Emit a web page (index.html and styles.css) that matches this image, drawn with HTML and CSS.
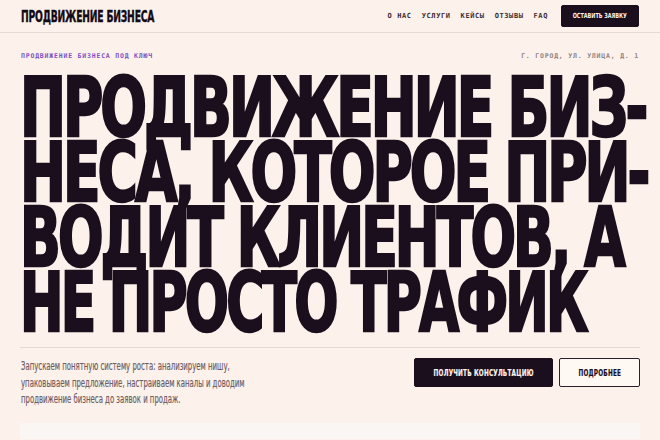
FILE: index.html
```html
<!DOCTYPE html>
<html lang="ru">
<head>
<meta charset="utf-8">
<title>Продвижение бизнеса</title>
<link rel="stylesheet" href="styles.css">
</head>
<body>
<header class="top">
  <a class="logo" href="#"><span class="logo-text">ПРОДВИЖЕНИЕ БИЗНЕСА</span></a>
  <nav class="nav">
    <a href="#">О НАС</a>
    <a href="#">УСЛУГИ</a>
    <a href="#">КЕЙСЫ</a>
    <a href="#">ОТЗЫВЫ</a>
    <a href="#">FAQ</a>
    <a class="btn btn-dark btn-small" href="#"><span class="btn-label">ОСТАВИТЬ ЗАЯВКУ</span></a>
  </nav>
</header>
<main class="hero">
  <div class="meta">
    <span class="eyebrow">ПРОДВИЖЕНИЕ БИЗНЕСА ПОД КЛЮЧ</span>
    <span class="address">Г. ГОРОД, УЛ. УЛИЦА, Д. 1</span>
  </div>
  <h1 class="title">
    <span class="line">ПРОДВИЖЕНИЕ БИЗ-</span>
    <span class="line">НЕСА, КОТОРОЕ ПРИ-</span>
    <span class="line line-tight">ВОДИТ КЛИЕНТОВ, А</span>
    <span class="line line-tighter">НЕ ПРОСТО ТРАФИК</span>
  </h1>
  <div class="lead-row">
    <p class="lead"><span class="lead-text">Запускаем понятную систему роста: анализируем нишу,<br>упаковываем предложение, настраиваем каналы и доводим<br>продвижение бизнеса до заявок и продаж.</span></p>
    <div class="actions">
      <a class="btn btn-dark btn-big btn-wide" href="#"><span class="btn-label">ПОЛУЧИТЬ КОНСУЛЬТАЦИЮ</span></a>
      <a class="btn btn-outline btn-big btn-narrow" href="#"><span class="btn-label">ПОДРОБНЕЕ</span></a>
    </div>
  </div>
  <div class="panel"></div>
</main>
</body>
</html>
```
FILE: styles.css
```css
* { box-sizing: border-box; }
html, body { margin: 0; padding: 0; }
body {
  background: #fdf2eb;
  color: #1b0f1e;
  font-family: "DejaVu Sans Condensed", "DejaVu Sans", sans-serif;
  font-stretch: condensed;
  width: 660px;
  height: 440px;
  overflow: hidden;
}
a { color: inherit; text-decoration: none; }

.top {
  height: 33px;
  border-bottom: 1px solid #e6d9d1;
  display: flex;
  align-items: center;
  justify-content: space-between;
  padding: 0 21px 0 21px;
}
.logo { width: 140px; }
.logo-text {
  display: inline-block;
  white-space: nowrap;
  font-size: 16px;
  font-weight: 700;
  line-height: 16px;
  letter-spacing: -0.3px;
  -webkit-text-stroke: 0.4px #140a16;
  transform: scaleX(0.64);
  transform-origin: left center;
  color: #140a16;
}
.nav {
  display: flex;
  align-items: center;
  gap: 10px;
}
.nav a {
  font-family: "DejaVu Sans Mono", "Liberation Mono", monospace;
  font-size: 7px;
  font-weight: 700;
  letter-spacing: 0.6px;
  color: #3a2d35;
}
.nav .btn { margin-left: 3px; }

.btn {
  display: flex;
  align-items: center;
  justify-content: center;
  font-weight: 700;
  border-radius: 2px;
  white-space: nowrap;
}
.nav a.btn {
  font-family: "DejaVu Sans Condensed", "DejaVu Sans", sans-serif;
  font-stretch: condensed;
  letter-spacing: 0;
}
.btn-label {
  display: inline-block;
  transform-origin: center center;
}
.btn-dark { background: #1b0f1e; color: #fdf2eb; border: 1px solid #1b0f1e; }
.nav a.btn-dark { color: #fdf2eb; }
.btn-outline { background: #fff8f3; color: #1b0f1e; border: 1.5px solid #2b1f2a; }
.btn-small {
  width: 78px;
  height: 22px;
  font-size: 8.5px;
}
.btn-small .btn-label { transform: scaleX(0.78); }
.btn-big {
  height: 29px;
  font-size: 9.5px;
  letter-spacing: 0.3px;
}
.btn-big .btn-label { transform: scaleX(0.67); -webkit-text-stroke: 0.2px currentColor; }
.btn-wide { width: 139px; }
.btn-narrow { width: 81px; }

.hero { padding: 0 20px; }
.meta {
  display: flex;
  justify-content: space-between;
  align-items: center;
  height: 14px;
  margin-top: 16px;
  padding: 0 1px;
  font-family: "DejaVu Sans Mono", "Liberation Mono", monospace;
  font-size: 6.5px;
  letter-spacing: 0.8px;
}
.eyebrow { color: #7a52c4; font-weight: 700; }
.address { color: #8d8387; font-weight: 700; }

.title {
  margin: 12px 0 0 0;
  height: 260px;
  font-size: 82px;
  line-height: 65px;
  font-weight: 700;
  letter-spacing: -4px;
  -webkit-text-stroke: 2.5px #1b0f1e;
  color: #1b0f1e;
  transform: scaleX(0.745);
  transform-origin: left top;
  white-space: nowrap;
}
.line { display: block; transform-origin: left top; }
.line-tight { transform: scaleX(0.975); }
.line-tighter { transform: scaleX(0.947); }

.lead-row {
  margin-top: 12px;
  border-top: 1px solid #e6d9d1;
  display: flex;
  justify-content: space-between;
  align-items: flex-start;
  padding: 10px 0 0 1px;
  height: 76px;
}
.lead {
  margin: 0;
  width: 260px;
  font-size: 11.5px;
  line-height: 16.5px;
  color: #6e5f66;
}
.lead-text {
  display: inline-block;
  white-space: nowrap;
  -webkit-text-stroke: 0.2px #6e5f66;
  transform: scaleX(0.67);
  transform-origin: left top;
}
.actions {
  display: flex;
  gap: 6px;
}
.panel {
  height: 16px;
  background: #faf6f3;
}
```
